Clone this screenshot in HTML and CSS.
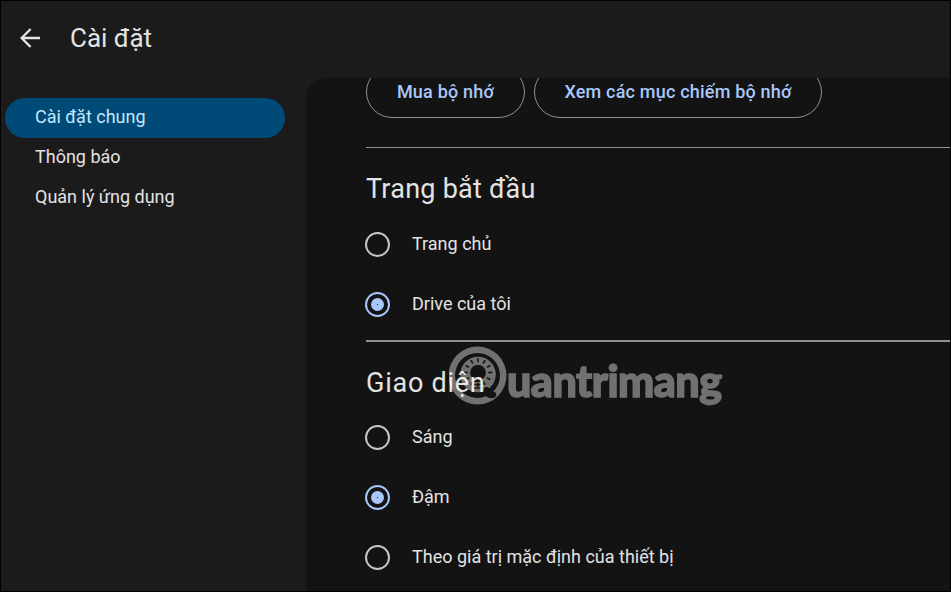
FILE: index.html
```html
<!DOCTYPE html>
<html lang="vi">
<head>
  <meta charset="UTF-8">
  <meta name="viewport" content="width=device-width, initial-scale=1.0">
  <title>Cài đặt</title>
  <link rel="stylesheet" href="styles.css">
</head>
<body>
  <div class="app">
    <header class="header">
      <button class="back-button" aria-label="Quay lại">
        <svg width="20" height="20" viewBox="0 0 20 20" fill="none" stroke="#e3e3e3" stroke-width="2.4">
          <path d="M20 10H2M10.6 1L1.6 10l9 9"/>
        </svg>
      </button>
      <h1>Cài đặt</h1>
    </header>

    <div class="layout">
      <nav class="sidebar">
        <a class="nav-item active">Cài đặt chung</a>
        <a class="nav-item">Thông báo</a>
        <a class="nav-item">Quản lý ứng dụng</a>
      </nav>

      <main class="content">
        <div class="storage-buttons">
          <button class="pill pill-buy">Mua bộ nhớ</button>
          <button class="pill pill-view">Xem các mục chiếm bộ nhớ</button>
        </div>

        <section class="start-page">
          <h2>Trang bắt đầu</h2>
          <label class="option"><span class="radio"></span><span class="option-text">Trang chủ</span></label>
          <label class="option"><span class="radio checked"></span><span class="option-text">Drive của tôi</span></label>
        </section>

        <section class="appearance">
          <h2>Giao diện</h2>
          <label class="option"><span class="radio"></span><span class="option-text">Sáng</span></label>
          <label class="option"><span class="radio checked"></span><span class="option-text">Đậm</span></label>
          <label class="option"><span class="radio"></span><span class="option-text">Theo giá trị mặc định của thiết bị</span></label>
        </section>
      </main>
    </div>
  </div>

  <div class="watermark">
    <svg width="58" height="60" viewBox="0 0 58 60">
      <mask id="bulb">
        <circle cx="28.5" cy="29.5" r="29" fill="#fff"/>
        <circle cx="28.5" cy="29.5" r="22.5" fill="#000"/>
        <circle cx="29" cy="28.5" r="17.8" fill="#fff"/>
        <!-- rays around the bulb -->
        <circle cx="29" cy="26.5" r="12.2" fill="none" stroke="#000" stroke-width="4" stroke-dasharray="1.6 4.683" stroke-dashoffset="0.8" pathLength="75.4"/>
        <path d="M29 19a7.7 7.7 0 0 1 4.5 14V36h-9v-3A7.7 7.7 0 0 1 29 19z" fill="#000"/>
        <path d="M24 38.5h10M24 42h10" stroke="#000" stroke-width="1.5"/>
        <path d="M36 41c4 0 6 2 7 5 3-1 5 1 4 4-2 3-7 3-10 0-3-1-4-5-1-9z" fill="#000"/>
      </mask>
      <rect width="58" height="60" fill="#fff" mask="url(#bulb)"/>
    </svg>
    <span class="watermark-text">uantrimang</span>
  </div>
</body>
</html>
```
FILE: styles.css
```css
* {
  box-sizing: border-box;
}

body {
  margin: 0;
  height: 100vh;
  overflow: hidden;
  background-color: #000;
  color: #e3e3e3;
  font-family: Roboto, "Liberation Sans", sans-serif;
}

button {
  background: none;
  border: none;
  padding: 0;
  font-family: inherit;
}

.app {
  display: flex;
  flex-direction: column;
  height: 592px;
  border: 1px solid #000;
  background-color: #1b1b1b;
}

.header {
  display: flex;
  align-items: center;
  height: 77px;
  padding: 0 0 3px 19px;
}

.back-button {
  display: flex;
}

h1 {
  margin: 0 0 0 30px;
  font-size: 26px;
  font-weight: 400;
  line-height: 32px;
}

.layout {
  display: flex;
  flex: 1;
  min-height: 0;
}

.sidebar {
  width: 305px;
  padding: 20px 21px 0 4px;
}

.nav-item {
  display: flex;
  align-items: center;
  height: 40px;
  padding: 0 0 3px 30px;
  border-radius: 20px;
  font-size: 18px;
}

.nav-item.active {
  background-color: #004a77;
  color: #c2e7ff;
}

.content {
  flex: 1;
  overflow: hidden;
  padding-left: 60px;
  border-top-left-radius: 20px;
  background-color: #131313;
}

.storage-buttons {
  display: flex;
  gap: 9px;
  height: 70px;
  margin-top: -12px;
  padding-bottom: 18px;
}

.pill {
  height: 52px;
  padding-bottom: 2px;
  border: 1px solid #8e918f;
  border-radius: 26px;
  color: #a8c7fa;
  font-size: 18px;
  font-weight: 500;
  letter-spacing: 0.2px;
}

.pill-buy {
  width: 159px;
}

.pill-view {
  width: 288px;
}

section {
  border-top: 1px solid #8e918f;
}

.start-page {
  margin-top: 11px;
  height: 193px;
}

.appearance {
  border-top-width: 2px;
}

h2 {
  margin: 0;
  padding-top: 24px;
  height: 66px;
  font-size: 27px;
  font-weight: 400;
  line-height: 34px;
  letter-spacing: 0.25px;
}

.appearance h2 {
  height: 65px;
  letter-spacing: 0.75px;
}

.option {
  display: flex;
  align-items: center;
  gap: 22px;
  height: 60px;
  margin-left: -1px;
  font-size: 18px;
}

.option-text {
  padding-bottom: 2px;
}

.radio {
  display: grid;
  place-items: center;
  width: 25px;
  height: 25px;
  border: 2px solid #c4c7c5;
  border-radius: 50%;
}

.radio.checked {
  border-color: #a8c7fa;
}

.radio.checked::after {
  content: "";
  width: 13px;
  height: 13px;
  border-radius: 50%;
  background: radial-gradient(circle, #131313 0.6px, #a8c7fa 0.9px);
}

.watermark {
  position: absolute;
  left: 449px;
  top: 346px;
  display: flex;
  opacity: 0.4;
  color: #fff;
}

.watermark-text {
  padding-top: 5px;
  font-family: Lato, sans-serif;
  font-size: 43px;
  font-weight: 900;
  line-height: 60px;
  letter-spacing: -0.5px;
  -webkit-text-stroke: 1.4px #fff;
}
```
